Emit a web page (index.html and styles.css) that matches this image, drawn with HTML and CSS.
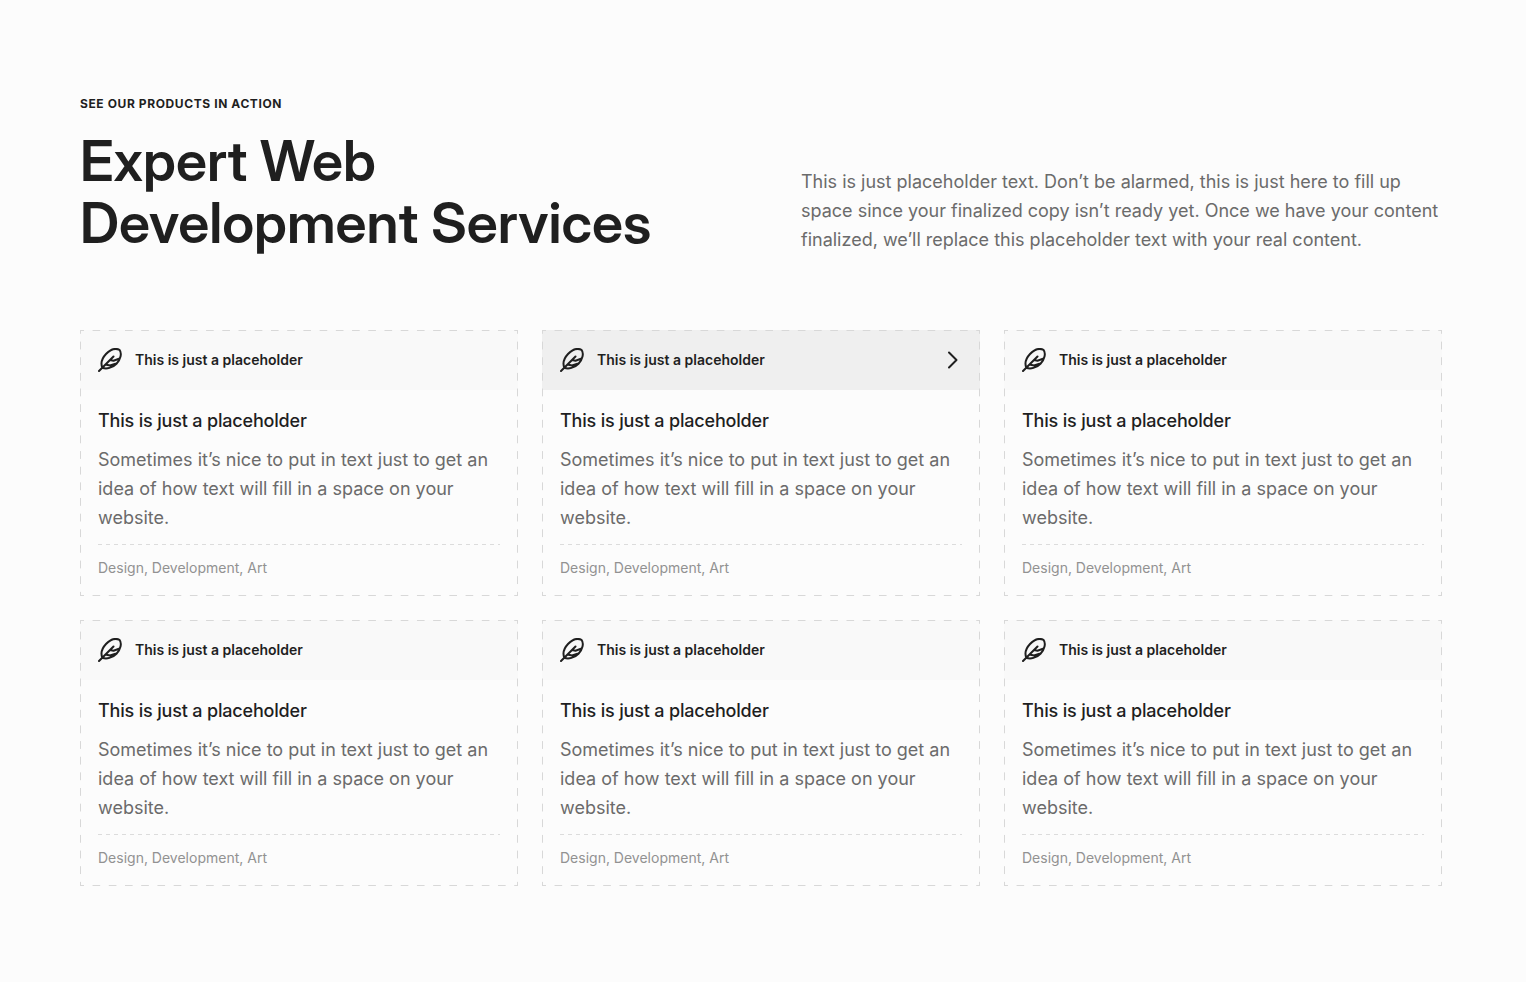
FILE: index.html
```html
<!DOCTYPE html>
<html lang="en">
<head>
<meta charset="utf-8">
<meta name="viewport" content="width=device-width, initial-scale=1">
<title>Expert Web Development Services</title>
<link rel="stylesheet" href="styles.css">
</head>
<body>
<svg class="sprite" aria-hidden="true">
  <symbol id="feather" viewBox="0 0 24 24">
    <path d="M1 23 15.500 8.500M4.300 19.700C2.600 15.500 4 10.300 8 6 12.300 1.400 17.500 0 21.500 1.800 24.200 5.200 22.500 11.500 18.500 15.700 14.500 19.800 8.500 21.400 4.300 19.700ZM12 12 15.500 12.700 21 10.800M7.500 16.500 12 17.500 17.500 15.700"/>
  </symbol>
  <symbol id="chevron" viewBox="0 0 12 18">
    <path d="m2 1.500 7.500 7.500L2 16.500"/>
  </symbol>
</svg>
<main class="section">
  <header class="intro">
    <div>
      <p class="eyebrow">See our products in action</p>
      <h1 class="heading">Expert Web<br>Development Services</h1>
    </div>
    <p class="lead">This is just placeholder text. Don’t be alarmed, this is just here to fill up space since your finalized copy isn’t ready yet. Once we have your content finalized, we’ll replace this placeholder text with your real content.</p>
  </header>
  <div class="grid">
    <article class="card">
      <a class="card-bar" href="#"><svg class="feather" aria-hidden="true"><use href="#feather"/></svg>This is just a placeholder</a>
      <div class="card-body"><h2 class="card-title">This is just a placeholder</h2><p class="card-text">Sometimes it’s nice to put in text just to get an idea of how text will fill in a space on your website.</p><p class="tags">Design, Development, Art</p></div>
    </article>
    <article class="card">
      <a class="card-bar card-bar-active" href="#"><svg class="feather" aria-hidden="true"><use href="#feather"/></svg>This is just a placeholder<svg class="chevron" aria-hidden="true"><use href="#chevron"/></svg></a>
      <div class="card-body"><h2 class="card-title">This is just a placeholder</h2><p class="card-text">Sometimes it’s nice to put in text just to get an idea of how text will fill in a space on your website.</p><p class="tags">Design, Development, Art</p></div>
    </article>
    <article class="card">
      <a class="card-bar" href="#"><svg class="feather" aria-hidden="true"><use href="#feather"/></svg>This is just a placeholder</a>
      <div class="card-body"><h2 class="card-title">This is just a placeholder</h2><p class="card-text">Sometimes it’s nice to put in text just to get an idea of how text will fill in a space on your website.</p><p class="tags">Design, Development, Art</p></div>
    </article>
    <article class="card">
      <a class="card-bar" href="#"><svg class="feather" aria-hidden="true"><use href="#feather"/></svg>This is just a placeholder</a>
      <div class="card-body"><h2 class="card-title">This is just a placeholder</h2><p class="card-text">Sometimes it’s nice to put in text just to get an idea of how text will fill in a space on your website.</p><p class="tags">Design, Development, Art</p></div>
    </article>
    <article class="card">
      <a class="card-bar" href="#"><svg class="feather" aria-hidden="true"><use href="#feather"/></svg>This is just a placeholder</a>
      <div class="card-body"><h2 class="card-title">This is just a placeholder</h2><p class="card-text">Sometimes it’s nice to put in text just to get an idea of how text will fill in a space on your website.</p><p class="tags">Design, Development, Art</p></div>
    </article>
    <article class="card">
      <a class="card-bar" href="#"><svg class="feather" aria-hidden="true"><use href="#feather"/></svg>This is just a placeholder</a>
      <div class="card-body"><h2 class="card-title">This is just a placeholder</h2><p class="card-text">Sometimes it’s nice to put in text just to get an idea of how text will fill in a space on your website.</p><p class="tags">Design, Development, Art</p></div>
    </article>
  </div>
</main>
</body>
</html>
```
FILE: styles.css
```css
* { box-sizing: border-box; }
body {
  margin: 0;
  background: #fcfcfc;
  color: #1f1f1f;
  font-family: Inter, "Liberation Sans", sans-serif;
}
h1, h2, p { margin: 0; }
.sprite { display: none; }
.section { padding: 94px 84px 96px 80px; }
.intro {
  display: grid;
  grid-template-columns: 1fr 1fr;
  gap: 80px;
  align-items: end;
  margin-bottom: 76px;
}
.eyebrow {
  margin-bottom: 16px;
  font-size: 12px;
  font-weight: 700;
  line-height: 20px;
  letter-spacing: 0.05em;
  text-transform: uppercase;
}
.heading {
  font-family: "Inter Display", Inter, "Liberation Sans", sans-serif;
  font-size: 56px;
  font-weight: 600;
  line-height: 62px;
}
.lead, .card-text {
  color: #6b6b6b;
  font-size: 18px;
  line-height: 29px;
}
.grid {
  display: grid;
  grid-template-columns: repeat(3, 1fr);
  gap: 24px;
}
.card { position: relative; }
/* Long-dash outline: each tile starts and ends with half a dash */
.card::after {
  content: "";
  position: absolute;
  inset: 0;
  pointer-events: none;
  --x: linear-gradient(90deg, #d8d8d8 25%, transparent 25% 75%, #d8d8d8 75%);
  --y: linear-gradient(#d8d8d8 25%, transparent 25% 75%, #d8d8d8 75%);
  background: var(--x) top, var(--x) bottom, var(--y) left, var(--y) right;
  background-size: 16px 1px, 16px 1px, 1px 16px, 1px 16px;
  background-repeat: round no-repeat, round no-repeat, no-repeat round, no-repeat round;
}
.card-bar {
  display: flex;
  align-items: center;
  gap: 13px;
  height: 60px;
  padding: 0 18px;
  background: #f9f9f9;
  color: inherit;
  font-size: 14px;
  font-weight: 600;
  line-height: 18px;
  text-decoration: none;
}
.card-bar-active { background: #efefef; }
.feather, .chevron {
  fill: none;
  stroke: currentColor;
  stroke-width: 2;
  stroke-linecap: round;
  stroke-linejoin: round;
}
.feather { width: 24px; height: 24px; }
.chevron { width: 12px; height: 18px; margin-left: auto; margin-right: 3px; }
.card-body { padding: 16px 18px 17px; }
.card-title {
  margin-bottom: 10px;
  font-size: 18px;
  font-weight: 500;
  line-height: 29px;
  letter-spacing: -0.01em;
}
.tags {
  margin-top: 12px;
  padding-top: 12px;
  background: repeating-linear-gradient(90deg, #dcdcdc 0 4px, transparent 4px 8px) top / 100% 1px no-repeat;
  color: #929292;
  font-size: 14px;
  line-height: 23px;
}
@media (max-width: 900px) {
  .section { padding: 48px 24px; }
  .intro, .grid { grid-template-columns: 1fr; }
}
```
